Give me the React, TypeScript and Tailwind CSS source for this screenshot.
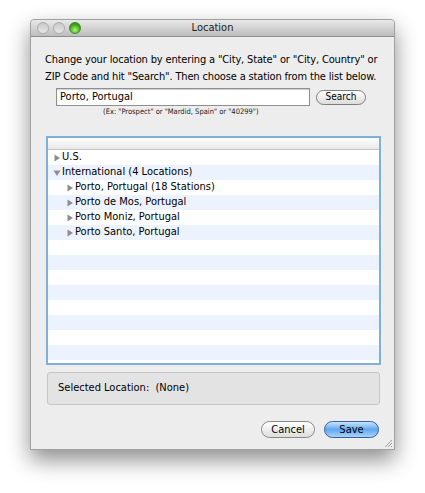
import React from "react";

const font = "font-['Lucida_Grande','DejaVu_Sans_Condensed',sans-serif]";

const Tri = ({ open }: { open?: boolean }) =>
  open ? (
    <svg width="8" height="8" viewBox="0 0 8 8" className="shrink-0">
      <path d="M0.5 1.5 L7.5 1.5 L4 7 Z" fill="#8e8e8e" />
    </svg>
  ) : (
    <svg width="8" height="8" viewBox="0 0 8 8" className="shrink-0">
      <path d="M1.5 0.5 L7 4 L1.5 7.5 Z" fill="#8e8e8e" />
    </svg>
  );

const rows: { label: string; indent: number; open?: boolean }[] = [
  { label: "U.S.", indent: 0 },
  { label: "International (4 Locations)", indent: 0, open: true },
  { label: "Porto, Portugal (18 Stations)", indent: 1 },
  { label: "Porto de Mos, Portugal", indent: 1 },
  { label: "Porto Moniz, Portugal", indent: 1 },
  { label: "Porto Santo, Portugal", indent: 1 },
];

const App = () => {
  const filler = Array.from({ length: 9 });
  return (
    <div className={`w-[425px] h-[493px] bg-white pt-[19px] pl-[30px] ${font}`}>
      <div className="w-[365px] h-[431px] bg-[#ededed] border border-[#a0a0a0] rounded-t-[4px] shadow-[0_10px_22px_rgba(0,0,0,0.45)] flex flex-col">
        {/* title bar */}
        <div className="h-[18px] flex items-center relative bg-gradient-to-b from-[#e9e9e9] to-[#bdbdbd] border-b border-[#8e8e8e] rounded-t-[4px]">
          <div className="flex gap-[4px] pl-[6px]">
            <span className="w-[12px] h-[12px] rounded-full bg-gradient-to-b from-[#c8c8c8] to-[#e8e8e8] border border-[#adadad]" />
            <span className="w-[12px] h-[12px] rounded-full bg-gradient-to-b from-[#c8c8c8] to-[#e8e8e8] border border-[#adadad]" />
            <span className="w-[12px] h-[12px] rounded-full bg-[radial-gradient(circle_at_50%_70%,#b5f57a,#3ea81c_60%,#2a7a10)] border border-[#3d8a22]" />
          </div>
          <div className="absolute inset-0 flex items-center justify-center text-[11px] text-[#222] pt-[1px]">
            Location
          </div>
        </div>

        <div className="px-[14px] pt-[14px] flex flex-col">
          <p className="text-[11px] leading-[17px] text-black tracking-[-0.15px] whitespace-nowrap">
            Change your location by entering a "City, State" or "City, Country" or
            <br />
            ZIP Code and hit "Search". Then choose a station from the list below.
          </p>

          <div className="flex items-center mt-[3px] pl-[11px]">
            <div className="w-[254px] h-[18px] bg-white border border-[#8f8f8f] shadow-[inset_0_1px_1px_rgba(0,0,0,0.2)] flex items-center pl-[3px] text-[11px] text-black">
              Porto, Portugal
            </div>
            <button className="ml-[6px] w-[50px] h-[15px] rounded-full border border-[#7e7e7e] bg-gradient-to-b from-white to-[#dcdcdc] text-[10px] leading-none text-black flex items-center justify-center">
              Search
            </button>
          </div>
          <div className="text-[7.5px] leading-[11px] pl-[58px] text-[#222]">
            (Ex: "Prospect" or "Mardid, Spain" or "40299")
          </div>

          {/* list */}
          <div className="mt-[19px] ml-[1px] w-[335px] h-[229px] border-2 border-[#7fb0dc] bg-white flex flex-col overflow-hidden">
            <div className="h-[12px] bg-gradient-to-b from-white to-[#e8e8e8] border-b border-[#c6c6c6] shrink-0" />
            {rows.map((r, i) => (
              <div
                key={r.label}
                className={`h-[15px] flex items-center gap-[1px] text-[11px] text-black shrink-0 ${i % 2 === 1 ? "bg-[#edf3fe]" : "bg-white"} ${r.indent ? "pl-[18px]" : "pl-[5px]"}`}
              >
                <Tri open={r.open} />
                <span>{r.label}</span>
              </div>
            ))}
            {filler.map((_, i) => (
              <div key={i} className={`h-[15px] shrink-0 ${i % 2 === 1 ? "bg-[#edf3fe]" : "bg-white"}`} />
            ))}
          </div>

          {/* selected */}
          <div className="mt-[7px] ml-[2px] w-[333px] h-[33px] rounded-[3px] border border-[#c6c6c6] bg-[#e3e3e3] flex items-center pl-[10px] text-[11px] text-black">
            Selected Location:&nbsp; (None)
          </div>

          <div className="flex justify-end gap-[9px] mt-[16px] pr-[1px]">
            <button className="w-[54px] h-[17px] rounded-full border border-[#888] bg-gradient-to-b from-white to-[#dedede] text-[11px] leading-none text-black flex items-center justify-center">
              Cancel
            </button>
            <button className="w-[55px] h-[17px] rounded-full border border-[#3b5f9c] bg-gradient-to-b from-[#c8e4fb] via-[#5fa7ef] to-[#a8d4fb] text-[11px] leading-none text-black flex items-center justify-center">
              Save
            </button>
          </div>
        </div>
        <div className="flex-1" />
        <div className="flex justify-end pr-[1px] pb-[1px]">
          <svg width="10" height="10" viewBox="0 0 10 10">
            <path d="M2 9 L9 2 M5 9 L9 5 M8 9 L9 8" stroke="#9a9a9a" strokeWidth="1" />
          </svg>
        </div>
      </div>
    </div>
  );
};

export default App;
